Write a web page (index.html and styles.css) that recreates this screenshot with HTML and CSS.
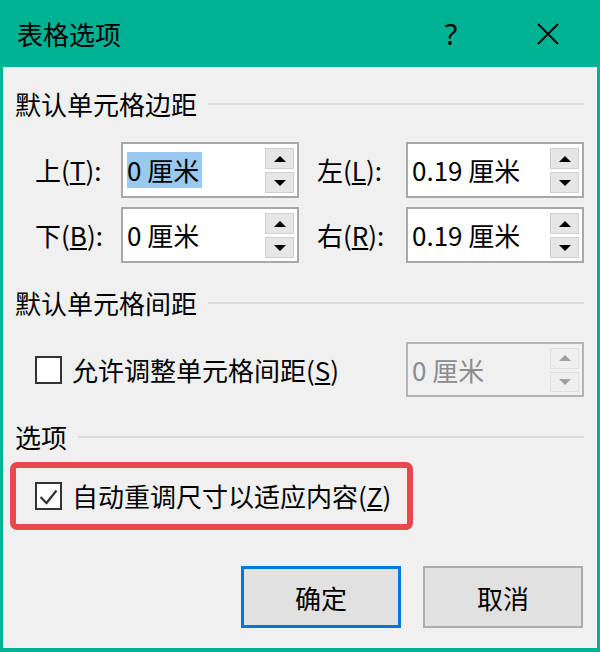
FILE: index.html
```html
<!DOCTYPE html>
<html lang="zh-CN">
<head>
<meta charset="utf-8">
<title>表格选项</title>
<link rel="stylesheet" href="styles.css">
</head>
<body>
<div class="window">
  <div class="titlebar">
    <span class="title">表格选项</span>
    <span class="help">?</span>
    <span class="close">
      <svg width="24" height="24" viewBox="0 0 24 24"><path d="M2 2 L22 22 M22 2 L2 22" stroke="#000" stroke-width="1.8" fill="none"/></svg>
    </span>
  </div>
  <div class="body">
    <div class="group-head"><span>默认单元格边距</span><span class="rule"></span></div>
    <div class="fields">
      <span class="lbl">上(<u>T</u>):</span>
      <div class="spin"><span class="val"><span class="sel">0 厘米</span></span><div class="arrows"><span class="arrow"><i class="up"></i></span><span class="arrow"><i class="down"></i></span></div></div>
      <span class="lbl lbl-right">左(<u>L</u>):</span>
      <div class="spin"><span class="val">0.19 厘米</span><div class="arrows"><span class="arrow"><i class="up"></i></span><span class="arrow"><i class="down"></i></span></div></div>
      <span class="lbl">下(<u>B</u>):</span>
      <div class="spin"><span class="val">0 厘米</span><div class="arrows"><span class="arrow"><i class="up"></i></span><span class="arrow"><i class="down"></i></span></div></div>
      <span class="lbl lbl-right">右(<u>R</u>):</span>
      <div class="spin"><span class="val">0.19 厘米</span><div class="arrows"><span class="arrow"><i class="up"></i></span><span class="arrow"><i class="down"></i></span></div></div>
    </div>
    <div class="group-head gh2"><span>默认单元格间距</span><span class="rule"></span></div>
    <div class="spacing-row">
      <label class="check"><span class="box"></span><span>允许调整单元格间距(<u>S</u>)</span></label>
      <div class="spin disabled"><span class="val">0 厘米</span><div class="arrows"><span class="arrow"><i class="up"></i></span><span class="arrow"><i class="down"></i></span></div></div>
    </div>
    <div class="group-head gh3"><span>选项</span><span class="rule"></span></div>
    <div class="highlight">
      <label class="check"><span class="box"><svg width="23" height="23" viewBox="0 0 23 23"><path d="M3.5 12 L9.5 18 L19.5 5.5" stroke="#333" stroke-width="2.2" fill="none"/></svg></span><span>自动重调尺寸以适应内容(<u>Z</u>)</span></label>
    </div>
    <div class="buttons">
      <button class="btn primary">确定</button>
      <button class="btn">取消</button>
    </div>
  </div>
</div>
</body>
</html>
```
FILE: styles.css
```css
body {
  margin: 0;
  background: #ffffff;
  font-family: "Noto Sans CJK SC", "Noto Sans", sans-serif;
  color: #000;
}
.window {
  width: 600px;
  height: 652px;
  box-sizing: border-box;
  background: #00b294;
  padding: 0 3px 4px 3px;
  display: flex;
  flex-direction: column;
}
.titlebar {
  height: 67px;
  display: flex;
  align-items: center;
  margin: 0 -3px;
  padding-left: 17px;
  padding-right: 32px;
}
.title {
  flex: 1;
  font-size: 26px;
  line-height: 30px;
}
.help {
  width: 40px;
  text-align: center;
  font-family: "Noto Sans", sans-serif;
  font-size: 29px;
  line-height: 30px;
  margin-right: 57px;
}
.close {
  width: 40px;
  height: 24px;
  display: flex;
  justify-content: center;
}
.body {
  flex: 1;
  background: #f0f0f0;
  padding: 22px 13px 0 10px;
  display: flex;
  flex-direction: column;
}
.group-head {
  display: flex;
  align-items: center;
  height: 30px;
  font-size: 26px;
  line-height: 30px;
  padding-left: 2px;
}
.rule {
  flex: 1;
  height: 2px;
  background: #dcdcdc;
  margin-left: 11px;
}
.fields {
  display: grid;
  grid-template-columns: 86px 178px 107px 178px;
  grid-auto-rows: 56px;
  row-gap: 9px;
  padding-left: 22px;
  margin-top: 23px;
}
.lbl {
  font-size: 26px;
  line-height: 30px;
  align-self: center;
  white-space: nowrap;
}
.lbl-right {
  padding-left: 18px;
}
.spin {
  box-sizing: border-box;
  border: 2px solid #a8a8a8;
  background: #ffffff;
  display: flex;
  align-items: center;
  height: 56px;
  width: 178px;
}
.val {
  flex: 1;
  padding-left: 4px;
  font-size: 26px;
  line-height: 36px;
  white-space: nowrap;
}
.sel {
  background: #99c9ef;
  display: inline-block;
  padding-right: 3px;
}
.arrows {
  align-self: stretch;
  width: 29px;
  margin: 4px 3px 3px 0;
  display: flex;
  flex-direction: column;
  gap: 3px;
}
.arrow {
  flex: 1;
  background: #e6e6e6;
  border: 1px solid #cfcfcf;
  display: flex;
  align-items: center;
  justify-content: center;
}
.arrow i {
  width: 0;
  height: 0;
  border-left: 6px solid transparent;
  border-right: 6px solid transparent;
}
.arrow .up {
  border-bottom: 6px solid #000;
}
.arrow .down {
  border-top: 6px solid #000;
}
.gh2 {
  margin-top: 25px;
}
.spacing-row {
  display: flex;
  align-items: center;
  margin-top: 24px;
  height: 55px;
  padding-left: 22px;
}
.spacing-row .spin {
  margin-left: auto;
  height: 55px;
}
.spin.disabled {
  background: #f0f0f0;
  border-color: #b4b4b4;
}
.spin.disabled .val {
  color: #8c8c8c;
}
.spin.disabled .arrow {
  background: #efefef;
  border-color: #dedede;
}
.spin.disabled .up {
  border-bottom-color: #a0a0a0;
}
.spin.disabled .down {
  border-top-color: #a0a0a0;
}
.check {
  display: flex;
  align-items: center;
  font-size: 26px;
  line-height: 30px;
  white-space: nowrap;
}
.box {
  box-sizing: border-box;
  width: 27px;
  height: 28px;
  border: 2px solid #333;
  background: #fff;
  margin-right: 10px;
  display: flex;
  align-items: center;
  justify-content: center;
}
.gh3 {
  margin-top: 25px;
}
.highlight {
  box-sizing: border-box;
  margin-top: 10px;
  margin-left: -3px;
  width: 403px;
  height: 68px;
  border: 6px solid #e8474c;
  border-radius: 7px;
  display: flex;
  align-items: center;
  padding-left: 19px;
}
.buttons {
  display: flex;
  justify-content: flex-end;
  gap: 22px;
  margin-top: 36px;
  margin-right: 1px;
}
.btn {
  box-sizing: border-box;
  width: 160px;
  height: 62px;
  background: #e1e1e1;
  border: 2px solid #adadad;
  font-family: "Noto Sans CJK SC", sans-serif;
  font-size: 26px;
  color: #000;
  padding: 0;
}
.btn.primary {
  border: 3px solid #0078d7;
}
```
